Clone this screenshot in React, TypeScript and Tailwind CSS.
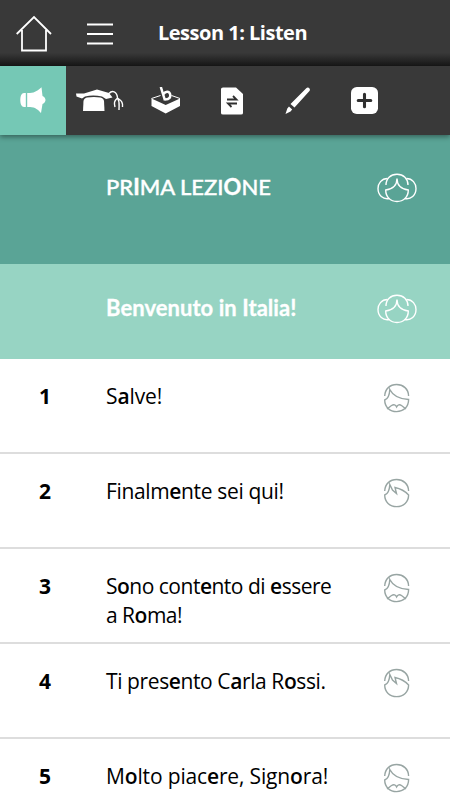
import type { ReactNode } from "react";

type Speaker = "group" | "beard" | "fringe";

function Face({ speaker }: { speaker: Speaker }) {
  if (speaker === "group") {
    return (
      <svg width="40" height="30" viewBox="0 0 40 30" fill="none" stroke="currentColor" strokeWidth="1.4">
        <path d="M9 12C9 5.500 13.500 1.200 20 1.200S31 5.500 31 12" />
        <path d="M20 5.500C20 12 16 16 8.700 17C8.700 24 13.500 28.500 20 28.500S31.300 24 31.300 17C24 16 20 12 20 5.500Z" />
        <path d="M10.500 5.500C4.500 5.500 1 10.500 1 15.500C1 22 6 27 12.500 25.500M29.500 5.500C35.500 5.500 39 10.500 39 15.500C39 22 34 27 27.500 25.500" />
      </svg>
    );
  }
  return (
    <svg width="28" height="30" viewBox="0 0 28 30" fill="none" stroke="currentColor" strokeWidth="1.4">
      <path d="M1.700 13C2 6 7 1.500 13.600 1.500S25.500 6 25.600 13" />
      {speaker === "beard" ? (
        <>
          <path d="M1.700 17C5 16 6.500 12 6.800 6.500C10 13 17 16 25.600 16.500C25.600 24 20.500 28.600 13.600 28.600S1.700 24 1.700 17Z" />
          <path d="M4 26L8.500 22.500Q12 20.500 13.600 24Q15.500 20.500 18.500 22.500L23 26" />
        </>
      ) : (
        <path d="M1.700 17C5 16 6.500 12 6.800 6.500L9.500 12L13.500 15.500L12 9.500C17 10.500 22 13 25.600 17C25.600 24 20.500 28.600 13.600 28.600S1.700 24 1.700 17Z" />
      )}
    </svg>
  );
}

// stressed vowel
function S({ children }: { children: ReactNode }) {
  return <b className="font-semibold">{children}</b>;
}

type Line = { id: number; text: ReactNode; speaker: Speaker; tracking: string };

const lines: Line[] = [
  { id: 1, text: <>S<S>a</S>lve!</>, speaker: "beard", tracking: "tracking-[-0.1px]" },
  { id: 2, text: <>Finalm<S>e</S>nte sei qui!</>, speaker: "fringe", tracking: "tracking-[-0.35px]" },
  {
    id: 3,
    text: <>S<S>o</S>no cont<S>e</S>nto di <S>e</S>ssere<br />a R<S>o</S>ma!</>,
    speaker: "beard",
    tracking: "tracking-[-0.5px]",
  },
  { id: 4, text: <>Ti pres<S>e</S>nto C<S>a</S>rla R<S>o</S>ssi.</>, speaker: "fringe", tracking: "tracking-[-0.4px]" },
  { id: 5, text: <>M<S>o</S>lto piac<S>e</S>re, Sign<S>o</S>ra!</>, speaker: "beard", tracking: "tracking-[-0.15px]" },
];

function Header() {
  return (
    <header className="flex h-[66px] shrink-0 items-center bg-linear-to-b from-[#393939] from-80% to-[#171717] text-white">
      <svg className="ml-4" width="36" height="38" viewBox="0 0 36 38" fill="none" stroke="currentColor" strokeWidth="1.800">
        <path d="M.7 20L18 3L35 20M6 16V36.500H30V16" />
      </svg>
      <svg className="mt-[2px] ml-[35px]" width="26" height="22" viewBox="0 0 26 22" stroke="currentColor" strokeWidth="1.800">
        <path d="M0 1.500H26M0 11H26M0 20.500H26" />
      </svg>
      <h1 className="ml-[45px] -mt-0.5 text-[20px] font-bold tracking-[-0.5px]">Lesson 1: Listen</h1>
    </header>
  );
}

function Toolbar() {
  return (
    <nav className="relative z-10 flex h-[69px] shrink-0 bg-[#393939] text-white shadow-[0_2px_5px_rgba(0,0,0,0.4)]">
      <button className="flex w-[66px] items-center justify-center bg-[#75c8b5]">
        <svg width="26" height="27" viewBox="0 0 26 27" fill="currentColor">
          <path d="M4 6H5.800V20H4C1.500 20 .3 17 .3 13S1.500 6 4 6Z" />
          <path d="M7.200 6H10C15 6 18.500 3 21.500 .3L22.500 9C26.500 11 26.500 15 22.500 17L21 26C18.500 23 15 20 10 20H7.200Z" />
        </svg>
      </button>
      <button className="flex w-[67px] items-center justify-center">
        <svg width="48" height="24" viewBox="0 0 48 24" fill="currentColor">
          <path d="M0 4.500L8 4.500L21 .5L33 4L36.500 8.500L30 10L26 7.500Q17 5.500 9 7.500L6 9.500L.5 7.500Z" />
          <path d="M7.500 12Q8 9 11 8.500Q18 7.500 24.500 8.500Q27.500 9 28 12L28.500 22H7Z" />
          <path d="M33 4.500C36 1 41 2 41.500 9M41.500 9C38 12 38 14 39 18M41.500 9C44 13 43 16 43 21M41.500 9C46 12 47 14 46.500 18" fill="none" stroke="currentColor" strokeWidth="1.400" />
        </svg>
      </button>
      <button className="flex w-[66px] items-center justify-center">
        <svg width="30" height="28" viewBox="0 0 30 28" fill="currentColor">
          <path d="M.5 11.500L14.700 18L29 11.500V19L14.700 26.500L.5 19Z" />
          <path d="M.5 11.500L9.500 8.500M20.500 8.500L29 11.500" fill="none" stroke="currentColor" />
          <path d="M9.800 0L14 13.500M12.500 7C14.500 4 18 3.800 19 6.800C20 10 18.500 12.500 14 12.500" fill="none" stroke="currentColor" strokeWidth="2.500" />
        </svg>
      </button>
      <button className="flex w-[66px] items-center justify-center">
        <svg width="22" height="28" viewBox="0 0 22 28" fill="currentColor">
          <path d="M2 .5H15L22 7V26Q22 27.500 20 27.500H2Q0 27.500 0 26V2Q0 .5 2 .5Z" />
          <path d="M6 12.500H15.500L12 9M16 16.500H7L10.500 20" fill="none" stroke="#303030" strokeWidth="1.800" />
        </svg>
      </button>
      <button className="flex w-[66px] items-center justify-center">
        <svg width="26" height="28" viewBox="0 0 26 28" fill="currentColor">
          <path d="M21 1.500Q23 -.5 24.500 1.500Q25.500 3 24 4.500L9.500 20.500L5.500 17Z" />
          <path d="M4 19.500L7.200 22.500L5.500 24.500L.5 27L2.300 21.500Z" />
        </svg>
      </button>
      <button className="flex w-[67px] items-center justify-center">
        <svg width="27" height="27" viewBox="0 0 28 28">
          <rect width="28" height="28" rx="6" fill="currentColor" />
          <path d="M14 7.500V20.500M7.500 14H20.500" stroke="#303030" strokeWidth="3.200" strokeLinecap="round" />
        </svg>
      </button>
    </nav>
  );
}

export default function App() {
  return (
    <div className="flex h-[800px] w-[450px] flex-col overflow-hidden bg-white font-['Open_Sans','Noto_Sans',sans-serif] text-[21px] leading-[29px] text-black">
      <Header />
      <Toolbar />
      <main>
        <section className="flex h-[129px] bg-[#5aa496] pt-[38px] pl-[106px] text-white">
          <h2 className="-mt-px w-[271px] font-[Lato,sans-serif] text-[22px] font-medium [-webkit-text-stroke:0.4px_white]">PR<b>I</b>MA LEZI<b>O</b>NE</h2>
          <Face speaker="group" />
        </section>
        <section className="flex h-[95px] bg-[#97d4c3] pt-[30px] pl-[106px] text-white">
          <h3 className="-mt-px w-[271px] font-[Lato,sans-serif] text-[22px] font-bold tracking-[0.05px] [-webkit-text-stroke:0.3px_white]">Benvenuto in Italia!</h3>
          <Face speaker="group" />
        </section>
        <ul>
          {lines.map((line) => (
            <li key={line.id} className="flex h-[95px] border-b-2 border-[#dddddd] pt-[23px]">
              <span className="w-[90px] text-center font-bold">{line.id}</span>
              <p className={`w-[277px] pl-4 whitespace-nowrap ${line.tracking}`}>{line.text}</p>
              <span className="mt-px ml-4 text-[#98a5a3]">
                <Face speaker={line.speaker} />
              </span>
            </li>
          ))}
        </ul>
      </main>
    </div>
  );
}
